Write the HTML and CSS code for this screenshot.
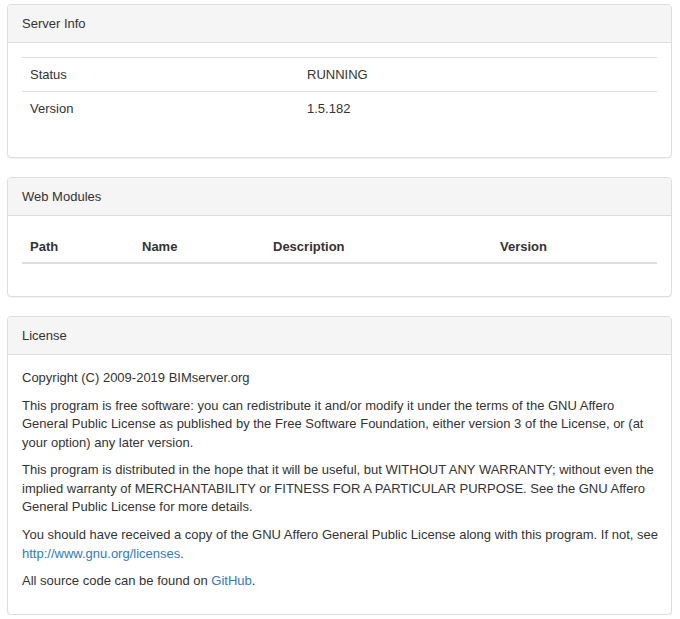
FILE: index.html
```html
<!DOCTYPE html>
<html lang="en">
<head>
<meta charset="utf-8">
<title>BIMserver</title>
<link rel="stylesheet" href="styles.css">
</head>
<body>
<div class="page">
  <section class="panel">
    <div class="panel-heading">Server Info</div>
    <div class="panel-body">
      <table class="table info-table">
        <tbody>
          <tr><td class="col-key">Status</td><td>RUNNING</td></tr>
          <tr><td class="col-key">Version</td><td>1.5.182</td></tr>
        </tbody>
      </table>
    </div>
  </section>

  <section class="panel">
    <div class="panel-heading">Web Modules</div>
    <div class="panel-body">
      <table class="table modules-table">
        <thead>
          <tr>
            <th class="col-path">Path</th>
            <th class="col-name">Name</th>
            <th class="col-desc">Description</th>
            <th>Version</th>
          </tr>
        </thead>
        <tbody></tbody>
      </table>
    </div>
  </section>

  <section class="panel">
    <div class="panel-heading">License</div>
    <div class="panel-body license">
      <p>Copyright (C) 2009-2019 BIMserver.org</p>
      <p>This program is free software: you can redistribute it and/or modify it under the terms of the GNU Affero General Public License as published by the Free Software Foundation, either version 3 of the License, or (at your option) any later version.</p>
      <p>This program is distributed in the hope that it will be useful, but WITHOUT ANY WARRANTY; without even the implied warranty of MERCHANTABILITY or FITNESS FOR A PARTICULAR PURPOSE. See the GNU Affero General Public License for more details.</p>
      <p>You should have received a copy of the GNU Affero General Public License along with this program. If not, see <a href="http://www.gnu.org/licenses/">http://www.gnu.org/licenses</a>.</p>
      <p>All source code can be found on <a href="https://github.com/opensourceBIM/BIMserver">GitHub</a>.</p>
    </div>
  </section>
</div>
</body>
</html>
```

FILE: styles.css
```css
* {
  box-sizing: border-box;
}

html, body {
  margin: 0;
  padding: 0;
  background: #fff;
}

body {
  font-family: "Liberation Sans", Arial, sans-serif;
  font-size: 13px;
  line-height: 18.57px;
  color: #333;
}

.page {
  padding: 4px 8px 0 7px;
  display: flex;
  flex-direction: column;
  gap: 19px;
}

.panel {
  background: #fff;
  border: 1px solid #ddd;
  border-radius: 4px;
  box-shadow: 0 1px 1px rgba(0, 0, 0, 0.05);
}

.panel-heading {
  background: #f5f5f5;
  border-bottom: 1px solid #ddd;
  border-radius: 3px 3px 0 0;
  padding: 9px 14px;
  line-height: 19px;
  color: #333;
}

.panel-body {
  padding: 14px;
}

.table {
  width: 100%;
  border-collapse: collapse;
  border-spacing: 0;
  margin-bottom: 18px;
}

.table td,
.table th {
  padding: 7px 8px;
  line-height: 19px;
  text-align: left;
  vertical-align: top;
}

.info-table td {
  border-top: 1px solid #ddd;
}

.info-table .col-key {
  width: 277px;
}

.modules-table th {
  font-weight: bold;
  border-bottom: 2px solid #ddd;
  padding: 7px 8px 6px;
}

.modules-table .col-path { width: 112px; }
.modules-table .col-name { width: 131px; }
.modules-table .col-desc { width: 227px; }

.license p {
  margin: 0 -6px 9px 0;
}

.license a {
  color: #337ab7;
  text-decoration: none;
}
```
